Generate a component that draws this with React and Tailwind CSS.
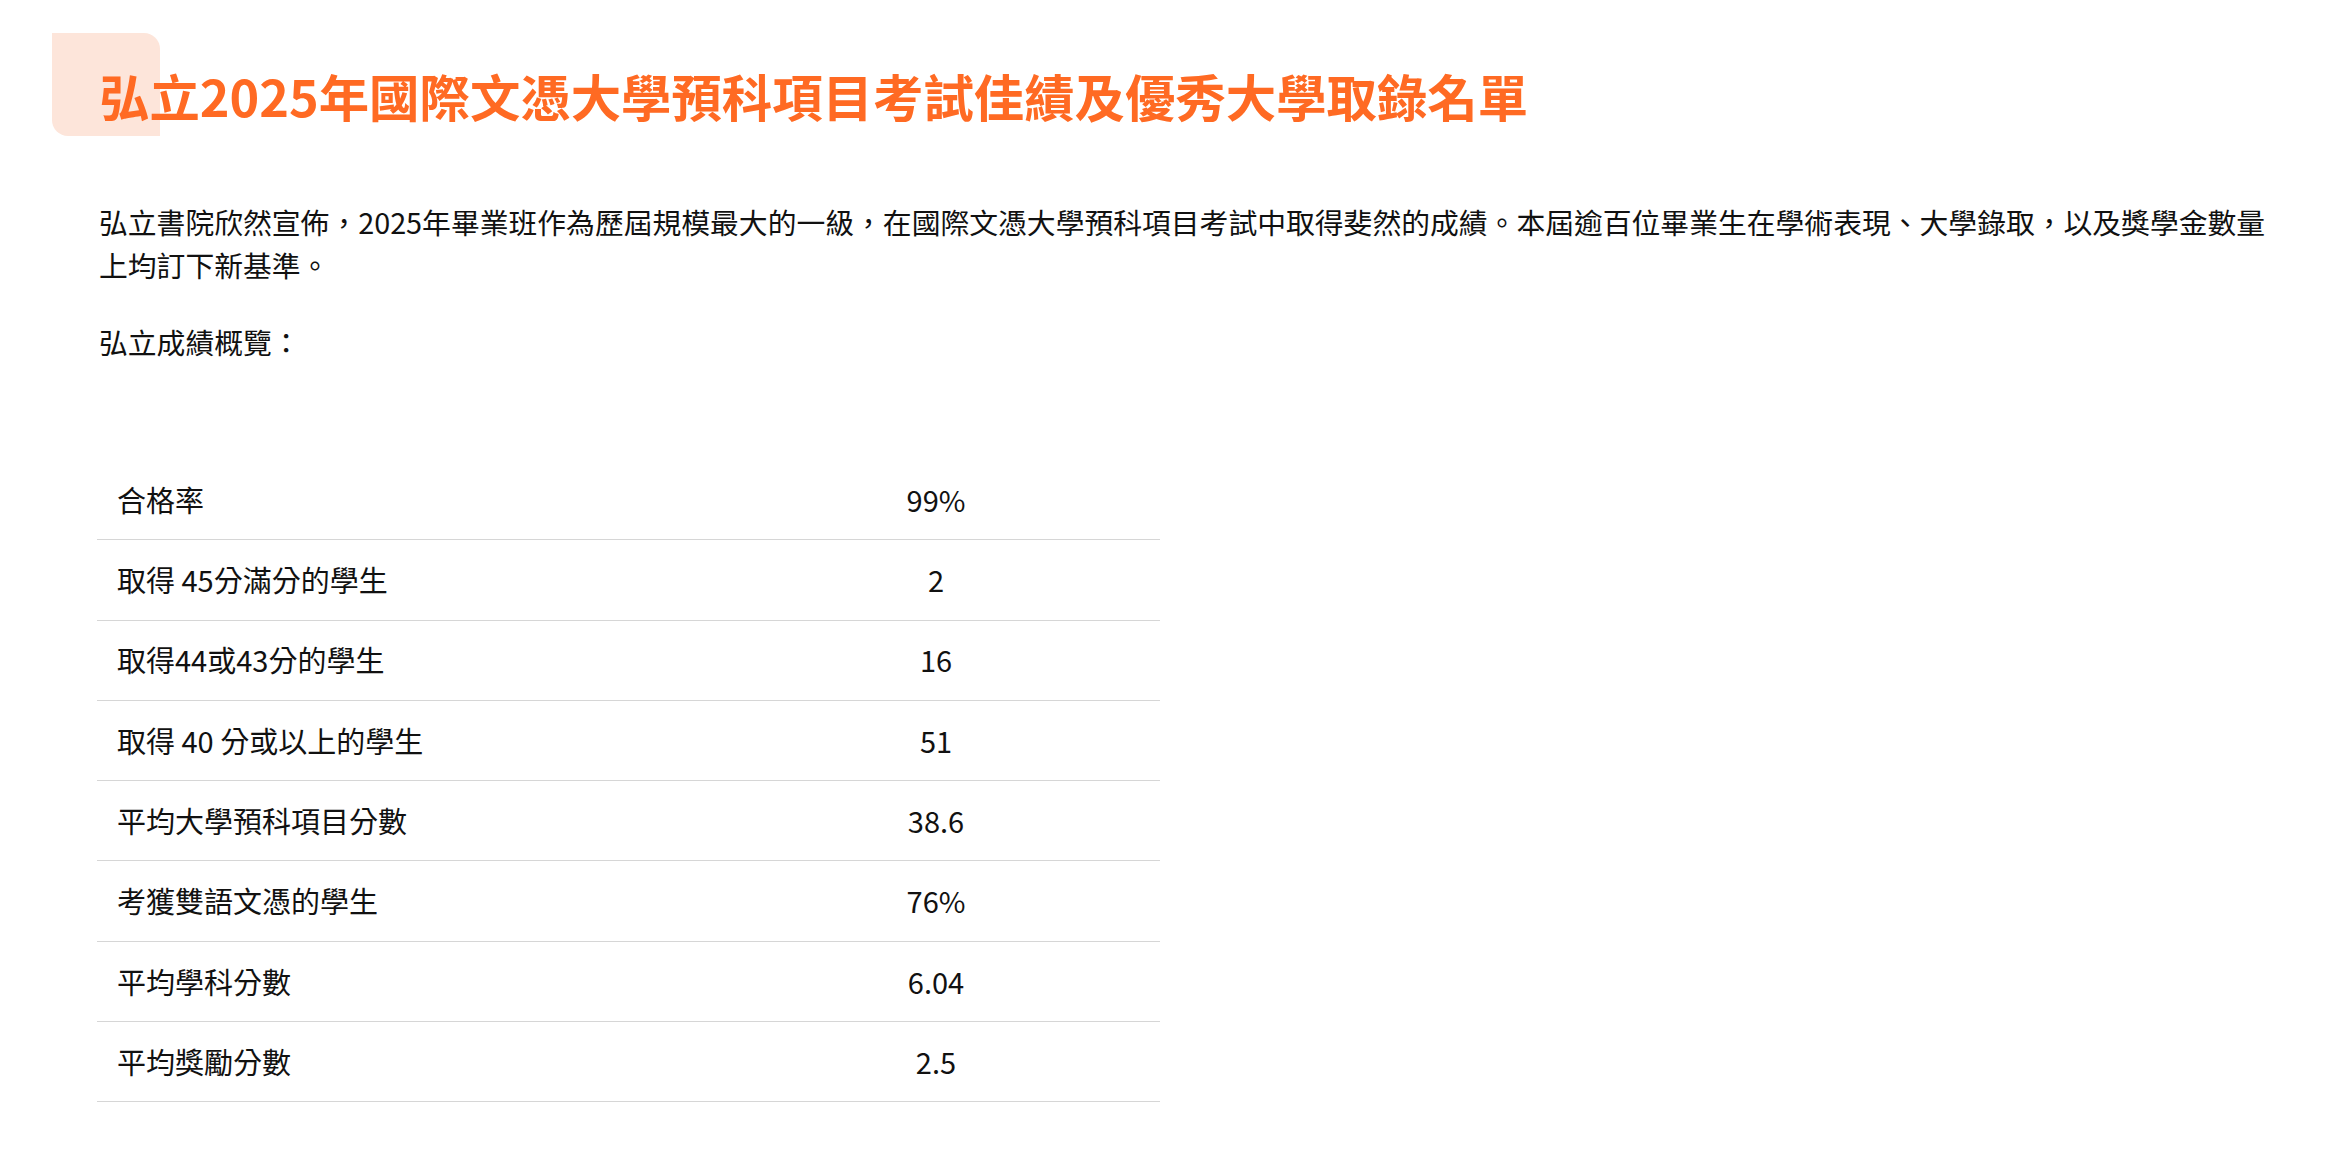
const STATS = [
  { label: '合格率', value: '99%' },
  { label: '取得 45分滿分的學生', value: '2' },
  { label: '取得44或43分的學生', value: '16' },
  { label: '取得 40 分或以上的學生', value: '51' },
  { label: '平均大學預科項目分數', value: '38.6' },
  { label: '考獲雙語文憑的學生', value: '76%' },
  { label: '平均學科分數', value: '6.04' },
  { label: '平均獎勵分數', value: '2.5' },
];

const FONT = "font-['Noto_Sans_CJK_TC','Noto_Sans',sans-serif]";

export default function App() {
  return (
    <div className={`min-h-screen bg-white ${FONT} text-[#111]`}>
      <div className="pl-[99px] pr-[60px] pt-[66px] pb-[40px]">
        {/* Title with peach accent */}
        <div className="relative">
          <span className="absolute left-[-47px] top-[-33px] w-[108px] h-[103px] bg-[#fde5da] rounded-tr-[16px] rounded-bl-[16px]" />
          <h1 className="relative text-[50.4px] leading-[60px] font-bold text-[#ff6a23]">
            弘立2025年國際文憑大學預科項目考試佳績及優秀大學取錄名單
          </h1>
        </div>

        <p className="mt-[74px] text-[28.8px] leading-[43px]">
          弘立書院欣然宣佈，2025年畢業班作為歷屆規模最大的一級，在國際文憑大學預科項目考試中取得斐然的成績。本屆逾百位畢業生在學術表現、大學錄取，以及獎學金數量上均訂下新基準。
        </p>

        <p className="mt-[34px] text-[28.8px] leading-[43px]">弘立成績概覽：</p>

        <div className="mt-[97px] ml-[-2px] w-[1063px]">
          {STATS.map((row) => (
            <div
              key={row.label}
              className="grid grid-cols-[615px_448px] items-center h-[80.3px] border-b border-[#d6d6d6] text-[29px]"
            >
              <div className="pl-[20px]">{row.label}</div>
              <div className="text-center">{row.value}</div>
            </div>
          ))}
        </div>
      </div>
    </div>
  );
}
